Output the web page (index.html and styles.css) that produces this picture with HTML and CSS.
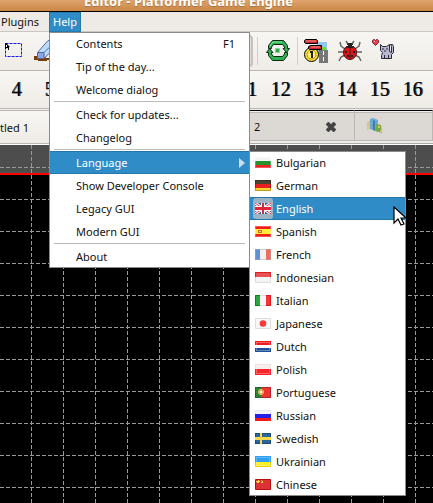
FILE: index.html
```html
<!DOCTYPE html>
<html lang="en">
<head>
<meta charset="utf-8">
<title>Editor - Platformer Game Engine</title>
<link rel="stylesheet" href="styles.css">
</head>
<body>
<div class="window">
  <header class="titlebar"><h1 class="title">Editor - Platformer Game Engine</h1></header>

  <nav class="menubar">
    <button class="menubar-item">Plugins</button>
    <div class="menu-anchor">
      <button class="menubar-item menubar-open">Help</button>
      <div class="menu">
        <ul class="menu-list">
          <li><button class="menu-item"><span>Contents</span><span>F1</span></button></li>
          <li><button class="menu-item">Tip of the day...</button></li>
          <li><button class="menu-item">Welcome dialog</button></li>
          <li class="menu-rule"></li>
          <li><button class="menu-item">Check for updates...</button></li>
          <li><button class="menu-item">Changelog</button></li>
          <li class="menu-rule"></li>
          <li class="menu-parent">
            <button class="menu-item menu-item-active"><span>Language</span><svg class="arrow" width="6" height="10" viewBox="0 0 6 10"><path d="M0 0L6 5L0 10Z" fill="#c4dff0"/></svg></button>
            <div class="menu submenu">
              <ul class="menu-list">
                <li><button class="menu-item language"><svg class="flag" viewBox="0 0 16 11"><path fill="#f4f4f4" d="M0 0h16v4H0z"/><path fill="#22942a" d="M0 4h16v4H0z"/><path fill="#ed2024" d="M0 8h16v3H0z"/><path class="shine" d="M.5 .5h15v10H.5z"/></svg>Bulgarian</button></li>
                <li><button class="menu-item language"><svg class="flag" viewBox="0 0 16 11"><path fill="#4a4530" d="M0 0h16v4H0z"/><path fill="#e82020" d="M0 4h16v4H0z"/><path fill="#fbd52c" d="M0 8h16v3H0z"/><path class="edge" d="M.5 .5h15v10H.5z"/></svg>German</button></li>
                <li><button class="menu-item language menu-item-active"><span class="checked"><svg class="flag" viewBox="0 0 16 11"><path fill="#3157a5" d="M0 0h16v11H0z"/><path stroke="#fff" stroke-width="3" d="M0 0L16 11M16 0L0 11"/><path stroke="#e3324a" d="M0 0L16 11M16 0L0 11"/><path fill="#fff" d="M6 0h4v11H6zM0 3h16v5H0z"/><path fill="#e3243c" d="M7 0h2v11H7zM0 4h16v3H0z"/></svg></span>English</button></li>
                <li><button class="menu-item language"><svg class="flag" viewBox="0 0 16 11"><path fill="#f01c18" d="M0 0h16v11H0z"/><path fill="#ffef35" d="M0 3h16v5H0z"/><path fill="#dd6540" d="M3 4h4v3H3z"/><path fill="#f6c59a" d="M4 5h2v1H4z"/><path class="shine" d="M.5 .5h15v10H.5z"/></svg>Spanish</button></li>
                <li><button class="menu-item language"><svg class="flag" viewBox="0 0 16 11"><path fill="#5f91d2" d="M0 0h5v11H0z"/><path fill="#f1f1f4" d="M5 0h6v11H5z"/><path fill="#f26b5e" d="M11 0h5v11h-5z"/><path fill="none" stroke="#aaa" stroke-opacity=".5" d="M.5 .5h15v10H.5z"/></svg>French</button></li>
                <li><button class="menu-item language"><svg class="flag" viewBox="0 0 16 11"><path fill="#ea5355" d="M0 0h16v5H0z"/><path fill="#f4f4f4" d="M0 5h16v6H0z"/><path fill="none" stroke="#d92020" d="M.5 5V.5h15V5"/><path fill="none" stroke="#ddd" d="M.5 5v5.500h15V5"/></svg>Indonesian</button></li>
                <li><button class="menu-item language"><svg class="flag" viewBox="0 0 16 11"><path fill="#2da540" d="M0 0h5v11H0z"/><path fill="#f6f6f6" d="M5 0h6v11H5z"/><path fill="#f03636" d="M11 0h5v11h-5z"/><path fill="none" stroke="#118018" d="M5 .5H.5v10H5"/><path fill="none" stroke="#e51515" d="M11 .5h4.500v10H11"/><path fill="none" stroke="#ddd" d="M5 .5h6M5 10.500h6"/></svg>Italian</button></li>
                <li><button class="menu-item language"><svg class="flag" viewBox="0 0 16 11"><path fill="#f7f7f7" stroke="#dedede" d="M.5 .5h15v10H.5z"/><circle cx="8" cy="5.500" r="3.300" fill="#f53b3b"/></svg>Japanese</button></li>
                <li><button class="menu-item language"><svg class="flag" viewBox="0 0 16 11"><path fill="#f01c20" d="M0 0h16v4H0z"/><path fill="#fff" d="M0 4h16v3H0z"/><path fill="#204f9c" d="M0 7h16v4H0z"/><path fill="none" stroke="#fff" stroke-opacity=".3" d="M1.500 1.500h13v8h-13z"/></svg>Dutch</button></li>
                <li><button class="menu-item language"><svg class="flag" viewBox="0 0 16 11"><path fill="#f5eeee" d="M0 0h16v5H0z"/><path fill="#f82428" d="M0 5h16v6H0z"/><path fill="none" stroke="#f4dede" d="M.5 5V.5h15V5"/><path fill="none" stroke="#fff" stroke-opacity=".3" d="M1.500 1.500h13v8h-13z"/></svg>Polish</button></li>
                <li><button class="menu-item language"><svg class="flag" viewBox="0 0 16 11"><path fill="#2f8038" d="M0 0h6v11H0z"/><path fill="#f53232" d="M6 0h10v11H6z"/><circle cx="6" cy="5" r="2.500" fill="#ef8f70" stroke="#e9cf4a"/><path fill="#fff" d="M5 4h2v2H5z"/><path class="edge" d="M.5 .5h15v10H.5z"/></svg>Portuguese</button></li>
                <li><button class="menu-item language"><svg class="flag" viewBox="0 0 16 11"><path fill="#f3f3f7" d="M0 0h16v4H0z"/><path fill="#2420e8" d="M0 4h16v4H0z"/><path fill="#f01820" d="M0 8h16v3H0z"/><path fill="none" stroke="#ddd" stroke-opacity=".6" d="M.5 4V.5h15V4"/></svg>Russian</button></li>
                <li><button class="menu-item language"><svg class="flag" viewBox="0 0 16 11"><path fill="#27669f" d="M0 0h16v11H0z"/><path class="edge" d="M.5 .5h15v10H.5z"/><path fill="#ffd84a" d="M5 0h2v11H5zM0 4h16v3H0z"/></svg>Swedish</button></li>
                <li><button class="menu-item language"><svg class="flag" viewBox="0 0 16 11"><path fill="#2f9ff5" d="M0 0h16v6H0z"/><path fill="#fff02a" d="M0 6h16v5H0z"/><path fill="none" stroke="#e8cc10" d="M.5 6v4.500h15V6"/><path fill="none" stroke="#fff" stroke-opacity=".25" d="M1.500 1.500h13v8h-13z"/></svg>Ukrainian</button></li>
                <li><button class="menu-item language"><svg class="flag" viewBox="0 0 16 11"><path fill="#dc3434" stroke="#b80c10" d="M.5 .5h15v10H.5z"/><path fill="#ffd84a" d="M2 2h1V1h1v1h1v1H4v1H2V3H1V2zM6 1h1v1H6zM7 2h1v2H6V3h1z"/></svg>Chinese</button></li>
              </ul>
            </div>
          </li>
          <li><button class="menu-item">Show Developer Console</button></li>
          <li><button class="menu-item">Legacy GUI</button></li>
          <li><button class="menu-item">Modern GUI</button></li>
          <li class="menu-rule"></li>
          <li><button class="menu-item">About</button></li>
        </ul>
      </div>
    </div>
  </nav>

  <div class="toolbar">
    <button class="tool" aria-label="Select">
      <svg width="24" height="24" viewBox="0 0 24 24"><path fill="none" stroke="#1414f0" stroke-dasharray="3 1" d="M3.500 4.500h16v13h-16z"/><path fill="#000" d="M3 4h1l4 4H7v3H6V9H5l-2 1z"/><path fill="#fff" d="M4 6h1v2H4z"/></svg>
    </button>
    <button class="tool" aria-label="Erase">
      <svg width="24" height="24" viewBox="0 0 24 24"><path fill="#783c06" d="M1 17h12v2h3v2h-2v1H5v-1H1z"/><path fill="#b9dcfa" stroke="#51699f" d="M4.500 13.500L15 1.500h8v6L11 19.500H4.500z"/><path fill="#8fa3e0" d="M5 14h6v5H5z"/><path fill="none" stroke="#51699f" d="M5 13.500h6L23 2M11 14v5"/></svg>
    </button>
    <div class="tool-group"></div>
    <i class="tool-rule"></i>
    <button class="tool tool-wide" aria-label="Reload">
      <svg width="24" height="24" viewBox="0 0 24 24"><path fill="#2fb152" stroke="#0c2a14" d="M6.500 1.500h11l4 5v3h2l-3 4-3.500-4h1.500V8l-2-2.500h-9L5.500 8v1.500h-3V6.500z"/><path fill="#2fb152" stroke="#0c2a14" d="M17.500 21.500h-11l-4-5v-3h-2l3-4 3.500 4H5.500V15l2 2.500h9l2-2.500v-1.500h3v3z"/><path fill="none" stroke="#86ea94" d="M4 7l3-4h9"/><path fill="#28a84a" stroke="#7fd68f" d="M9.500 9.500h4v4h-4z"/></svg>
    </button>
    <i class="tool-rule"></i>
    <button class="tool tool-items" aria-label="Level items">
      <svg width="24" height="24" viewBox="0 0 24 24"><path fill="#92c6f7" d="M13 3h10v11H13z"/><path fill="#6bdc32" d="M18 8h4v2h1v4h-5z"/><circle cx="7.500" cy="15.500" r="7" fill="#f9df3e" stroke="#000"/><circle cx="7.500" cy="15.500" r="4.500" fill="#ffef6a" stroke="#b78c0c"/><path fill="#222" d="M6 12h3v7H7v-5H6z"/><path fill="#c9252b" stroke="#000" d="M1.500 .5h11l1 1v3h-12l-1-1v-2zM6.500 6.500h11v4h-12l-1-1v-2z"/><path stroke="#ff8d88" d="M2 2h10M7 8h9"/><path fill="#777" d="M15 11h9v13h-9z"/><path stroke="#fff" stroke-dasharray="4 2" d="M19.500 12v12"/></svg>
    </button>
    <button class="tool" aria-label="Debug">
      <svg width="24" height="24" viewBox="0 0 24 24"><path fill="none" stroke="#666" stroke-width="1.500" d="M8 2l2 3M16 2l-2 3M7 10L3 7 2 3M17 10l4-3 1-4M6 13H0M18 13h6M7 16l-4 2-2 4M17 16l4 2 2 4"/><ellipse cx="12" cy="13.500" rx="6.500" ry="7" fill="#e01515" stroke="#451010"/><path fill="#222" d="M8 7l2-3h4l2 3-1 2H9zM11.500 9h1v11h-1zM7 12h2v2H7zM15 12h2v2h-2zM9 16h2v2H9zM13 16h2v2h-2z"/><path fill="#fff" d="M8 6h2v1H8zM14 6h2v1h-2z"/></svg>
    </button>
    <button class="tool" aria-label="Donate">
      <svg width="24" height="24" viewBox="0 0 24 24"><path fill="#ed3a4c" stroke="#7c2028" d="M1.500 1.500l1-1h1l1 1 1-1h1l1 1v2l-3 3-3-3z"/><path fill="#fff" d="M3 2h1v1H3z"/><path fill="#b9b8d2" stroke="#292938" d="M9.500 5.500l2 2h4l3-2v7l2 1V7.500l-1-2h2l1 2v6l-2 2v4h-10v-3l1-3-2-2z"/><path fill="none" stroke="#292938" d="M11 10h2M15 10h2M13 12h2M13.500 16v3M17.500 16v3"/></svg>
    </button>
  </div>

  <div class="toolbar numbers">
    <button class="number">4</button><button class="number">5</button><i class="number-gap"></i><button class="number">11</button><button class="number">12</button><button class="number">13</button><button class="number">14</button><button class="number">15</button><button class="number">16</button>
  </div>

  <div class="tabs">
    <button class="tab tab-current">tled 1</button>
    <button class="tab tab-second"><span>2</span><svg width="10" height="10" viewBox="0 0 10 10"><path fill="none" stroke="#444" stroke-width="4" d="M1 1l8 8M9 1L1 9"/></svg></button>
    <button class="tab tab-third" aria-label="Level">
      <svg width="16" height="16" viewBox="0 0 16 16"><path fill="#d7c68c" d="M0 4l3-2v9l-3 1z"/><path fill="#69a9d2" d="M3 1l3-1 5 2v12l-8-3z"/><path fill="#3e7eae" d="M6 2l2 1v10l-2-1z"/><path fill="#78a646" d="M9 6l5 1 1 8-6-2z"/><path fill="#d6c765" d="M11 8h2v2h-2zM13 12h2v2h-2z"/></svg>
    </button>
  </div>

  <main class="canvas">
    <svg class="grid" width="100%" height="100%">
      <defs>
        <pattern id="cells" width="96" height="96" patternUnits="userSpaceOnUse">
          <path fill="none" stroke="#999" stroke-dasharray="4 2" d="M31.500 0v96M63.500 0v96M95.500 0v96M0 22.500h96M0 54.500h96M0 86.500h96"/>
        </pattern>
      </defs>
      <rect width="100%" height="28" fill="#4d4d4d"/>
      <rect width="100%" height="100%" fill="url(#cells)"/>
      <rect y="28" width="100%" height="2" fill="#f00"/>
    </svg>
  </main>
</div>
<svg class="pointer" width="14" height="21" viewBox="0 0 14 21"><path fill="#fff" stroke="#000" stroke-width="1.200" d="M1 1v16l4-4 3 6 3-1-3-6h5z"/></svg>
</body>
</html>
```
FILE: styles.css
```css
* {
  box-sizing: border-box;
}

body {
  margin: 0;
  font-family: "Noto Sans", sans-serif;
  font-size: 11px;
  color: #111;
}

button {
  margin: 0;
  padding: 0;
  border: 0;
  background: none;
  font: inherit;
  color: inherit;
}

.window {
  display: flex;
  flex-direction: column;
  height: 100vh;
  overflow: hidden;
  background: #f0eeea;
}

.titlebar {
  display: flex;
  justify-content: center;
  align-items: flex-end;
  flex: none;
  height: 12px;
  padding-right: 56px;
  border-bottom: 1px solid #000;
  background: linear-gradient(#dfa36d, #c98745);
}

.title {
  margin: 0;
  font-size: 13px;
  line-height: 20px;
  color: #fff;
  white-space: nowrap;
  text-shadow: 0 1px 1px #a46e3b;
}

.menubar {
  display: flex;
  flex: none;
  height: 20px;
  background: #eeebe7;
  border-bottom: 1px solid #cbc8c4;
}

.menubar-item {
  width: 49px;
  height: 20px;
  padding-right: 9px;
  line-height: 20px;
}

.menubar-open {
  width: 32px;
  padding: 0;
  background: #308cc6;
  border: 1px solid #2679b0;
  line-height: 18px;
  color: #fff;
}

.menu-anchor,
.menu-parent {
  position: relative;
}

.menu {
  position: absolute;
  z-index: 2;
  top: 20px;
  left: 0;
  width: 201px;
  border: 1px solid #8c8b89;
  background: #fff;
}

.menu-list {
  margin: -1px 0;
  padding: 0;
  list-style: none;
}

.menu-item {
  display: flex;
  align-items: center;
  justify-content: space-between;
  width: 100%;
  height: 23px;
  padding: 0 14px 0 26px;
  white-space: nowrap;
}

.menu-item-active {
  background: #308cc6;
  border: solid #2477ab;
  border-width: 1px 0;
  color: #fff;
}

.menu-rule {
  height: 2px;
  margin: 0 4px;
  border-top: 1px solid #bbb;
}

.arrow {
  margin-right: -10px;
}

.submenu {
  top: 0;
  left: 199px;
  width: 157px;
}

.language {
  justify-content: flex-start;
  gap: 5px;
  padding: 0 5px;
}

.flag {
  display: block;
  width: 16px;
  height: 11px;
}

.shine,
.edge {
  fill: none;
  stroke: #fff;
  stroke-opacity: 0.25;
}

.edge {
  stroke: #000;
}

.checked {
  margin: 0 -2px;
  padding: 5px 2px;
  border-radius: 3px;
  background: #9cb4c4;
}

.toolbar {
  display: flex;
  align-items: center;
  flex: none;
  height: 39px;
  border-bottom: 1px solid #bbb8b4;
  background: linear-gradient(#f8f6f3, #efece7);
  overflow: hidden;
}

.tool {
  display: flex;
  flex: none;
  align-items: center;
  justify-content: center;
  width: 33px;
  height: 32px;
}

.tool:first-child {
  width: 28px;
}

.tool-wide {
  width: 39px;
}

.tool-items {
  width: 35px;
}

.tool-group {
  flex: none;
  width: 192px;
  height: 32px;
  margin-right: 4px;
  border: 2px solid #c6c3bf;
  border-radius: 4px;
  background: #e2dfdb;
}

.tool-rule {
  flex: none;
  width: 1px;
  height: 28px;
  background: #d2cfcb;
}

.numbers {
  height: 38px;
}

.number {
  flex: none;
  width: 33px;
  font: 20px "Liberation Serif", serif;
  color: #000;
  text-shadow: 1px 0 0 #555;
}

.number-gap {
  flex: none;
  width: 165px;
}

.tabs {
  display: flex;
  flex: none;
  height: 36px;
  padding-top: 1px;
  border-bottom: 1px solid #fff;
  background: #efedea;
  box-shadow: inset 0 -1px #a9aaa5;
}

.tab {
  display: flex;
  align-items: center;
  flex: none;
  margin-bottom: 3px;
  border-top: 1px solid #000;
  border-right: 1px solid #bbb8b4;
  border-bottom: 1px solid #bbb8b4;
  background: #dcd9d5;
  box-shadow: inset 0 1px #f4f2ef, inset 0 2px #bbb8b4;
}

.tab-current {
  width: 134px;
  margin-bottom: 0;
  border-top-color: #bbb8b4;
  background: linear-gradient(#f8f6f3, #efece7);
  box-shadow: none;
}

.tab-second {
  justify-content: space-between;
  width: 221px;
  padding: 2px 18px 0 120px;
}

.tab-third {
  flex: 1;
  padding-left: 12px;
}

.canvas {
  flex: 1;
  min-height: 0;
  background: #000;
}

.grid {
  display: block;
}

.pointer {
  position: absolute;
  z-index: 3;
  top: 206px;
  left: 393px;
}
```
